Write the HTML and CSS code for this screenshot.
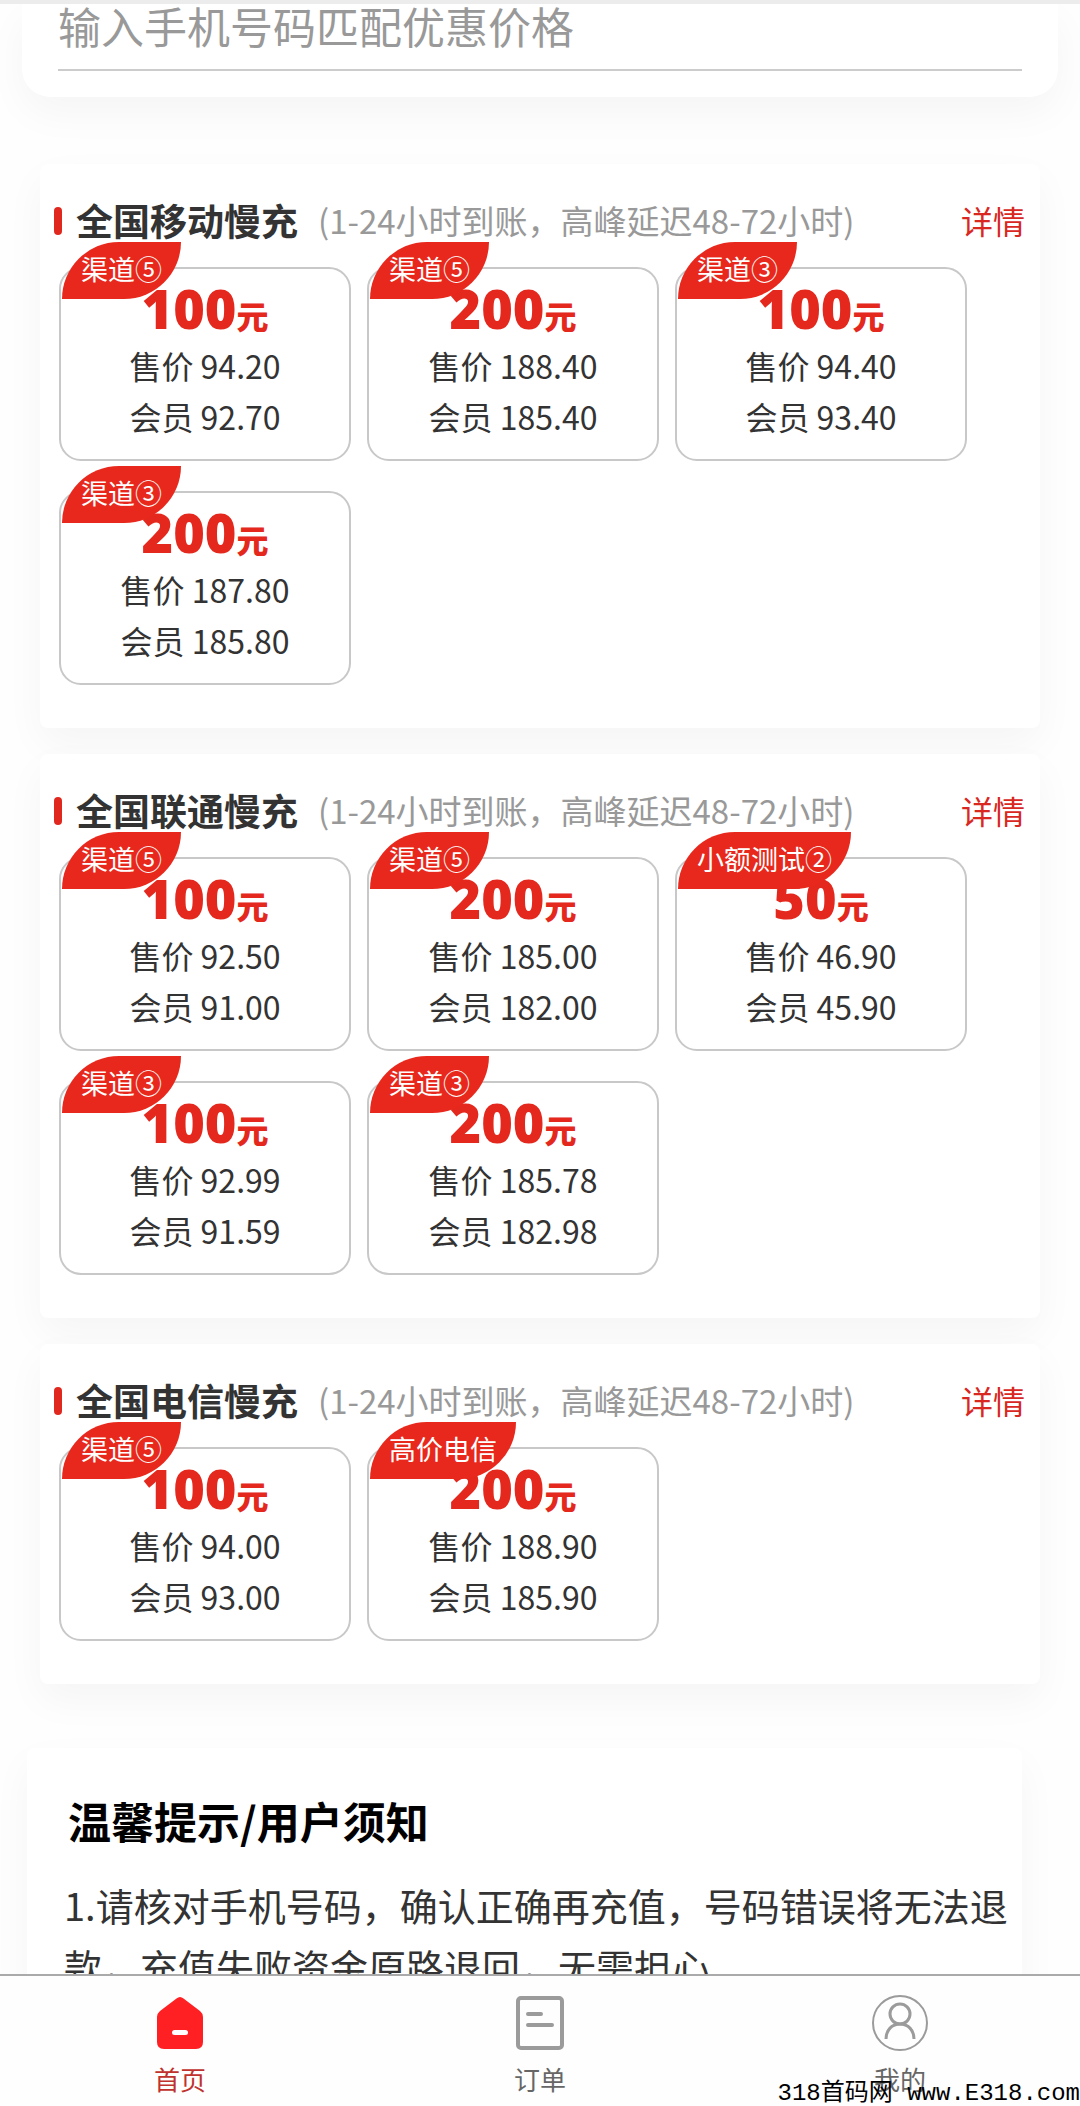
FILE: index.html
```html
<!DOCTYPE html>
<html lang="zh-CN">
<head>
  <meta charset="UTF-8" />
  <meta name="viewport" content="width=device-width, initial-scale=1.0" />
  <title>话费充值</title>
  <link rel="stylesheet" href="styles.css">
</head>
<body>
  <main class="content">
    <form class="search">
      <input class="search-input" type="tel" id="phone" name="phone" aria-label="手机号码" placeholder="输入手机号码匹配优惠价格" />
    </form>

    <section class="panel">
      <div class="panel-head">
        <h2 class="panel-title">全国移动慢充</h2>
        <span class="panel-note">(1-24小时到账，高峰延迟48-72小时)</span>
        <a class="panel-link" href="#">详情</a>
      </div>
      <div class="goods">
        <button type="button" class="item">
          <span class="badge">渠道⑤</span>
          <span class="amount">100<small>元</small></span>
          <span class="price">售价 94.20</span>
          <span class="price">会员 92.70</span>
        </button>
        <button type="button" class="item">
          <span class="badge">渠道⑤</span>
          <span class="amount">200<small>元</small></span>
          <span class="price">售价 188.40</span>
          <span class="price">会员 185.40</span>
        </button>
        <button type="button" class="item">
          <span class="badge">渠道③</span>
          <span class="amount">100<small>元</small></span>
          <span class="price">售价 94.40</span>
          <span class="price">会员 93.40</span>
        </button>
        <button type="button" class="item">
          <span class="badge">渠道③</span>
          <span class="amount">200<small>元</small></span>
          <span class="price">售价 187.80</span>
          <span class="price">会员 185.80</span>
        </button>
      </div>
    </section>

    <section class="panel">
      <div class="panel-head">
        <h2 class="panel-title">全国联通慢充</h2>
        <span class="panel-note">(1-24小时到账，高峰延迟48-72小时)</span>
        <a class="panel-link" href="#">详情</a>
      </div>
      <div class="goods">
        <button type="button" class="item">
          <span class="badge">渠道⑤</span>
          <span class="amount">100<small>元</small></span>
          <span class="price">售价 92.50</span>
          <span class="price">会员 91.00</span>
        </button>
        <button type="button" class="item">
          <span class="badge">渠道⑤</span>
          <span class="amount">200<small>元</small></span>
          <span class="price">售价 185.00</span>
          <span class="price">会员 182.00</span>
        </button>
        <button type="button" class="item">
          <span class="badge">小额测试②</span>
          <span class="amount">50<small>元</small></span>
          <span class="price">售价 46.90</span>
          <span class="price">会员 45.90</span>
        </button>
        <button type="button" class="item">
          <span class="badge">渠道③</span>
          <span class="amount">100<small>元</small></span>
          <span class="price">售价 92.99</span>
          <span class="price">会员 91.59</span>
        </button>
        <button type="button" class="item">
          <span class="badge">渠道③</span>
          <span class="amount">200<small>元</small></span>
          <span class="price">售价 185.78</span>
          <span class="price">会员 182.98</span>
        </button>
      </div>
    </section>

    <section class="panel">
      <div class="panel-head">
        <h2 class="panel-title">全国电信慢充</h2>
        <span class="panel-note">(1-24小时到账，高峰延迟48-72小时)</span>
        <a class="panel-link" href="#">详情</a>
      </div>
      <div class="goods">
        <button type="button" class="item">
          <span class="badge">渠道⑤</span>
          <span class="amount">100<small>元</small></span>
          <span class="price">售价 94.00</span>
          <span class="price">会员 93.00</span>
        </button>
        <button type="button" class="item">
          <span class="badge">高价电信</span>
          <span class="amount">200<small>元</small></span>
          <span class="price">售价 188.90</span>
          <span class="price">会员 185.90</span>
        </button>
      </div>
    </section>

    <section class="notice">
      <h2 class="notice-title">温馨提示/用户须知</h2>
      <p class="notice-text">1.请核对手机号码，确认正确再充值，号码错误将无法退款，充值失败资金原路退回，无需担心</p>
    </section>
  </main>

  <nav class="tabbar">
    <a class="tab active" href="#">
      <svg class="tab-icon" viewBox="0 0 60 60" aria-hidden="true">
        <path d="M26.500 5.500Q30 2.500 33.500 5.500L50 18Q53 20.500 53 24V49Q53 56 46 56H14Q7 56 7 49V24Q7 20.500 10 18Z" fill="#ff2024"/>
        <path d="M24.500 39.500H35.500" stroke="#fff" stroke-width="5" stroke-linecap="round"/>
      </svg>
      <span>首页</span>
    </a>
    <a class="tab" href="#">
      <svg class="tab-icon" viewBox="0 0 60 60" fill="none" stroke="#9b9b9b" stroke-width="4" stroke-linecap="round" aria-hidden="true">
        <rect x="8" y="5" width="44" height="50" rx="3"/>
        <path d="M18 21H31M18 32H42"/>
      </svg>
      <span>订单</span>
    </a>
    <a class="tab" href="#">
      <svg class="tab-icon" viewBox="0 0 60 60" fill="none" stroke="#9b9b9b" stroke-width="2" aria-hidden="true">
        <circle cx="30" cy="30" r="27"/>
        <circle cx="30" cy="21" r="10" stroke-width="3"/>
        <path d="M16 46C16 37 22 31 30 31S44 37 44 46" stroke-width="3"/>
      </svg>
      <span>我的</span>
    </a>
    <span class="site">318首码网 www.E318.com</span>
  </nav>
</body>
</html>
```

FILE: styles.css
```css
* {
  box-sizing: border-box;
}
body {
  margin: 0;
  height: 100vh;
  display: flex;
  flex-direction: column;
  font-family: "Noto Sans CJK SC", sans-serif;
  color: #333;
  background-color: #fefefe;
}
a {
  text-decoration: none;
}
.content {
  flex: 1;
  min-height: 0;
  overflow-y: auto;
  scrollbar-width: none;
  border-top: 4px solid #ececec;
}

/* search */
.search {
  margin: 0 22px 67px;
  padding: 0 36px 26px;
  background-color: #fff;
  border-radius: 0 0 28px 28px;
  box-shadow: 0 16px 40px rgba(0, 0, 0, 0.04);
}
.search-input {
  display: block;
  width: 100%;
  height: 67px;
  padding: 0 0 24px;
  border: none;
  border-bottom: 2px solid #ccc;
  background: none;
  font-family: inherit;
  font-size: 43px;
  line-height: 40px;
  color: #333;
  outline: none;
}
.search-input::placeholder {
  color: #999;
  opacity: 1;
}

/* goods panels */
.panel {
  margin: 0 40px 26px;
  padding: 34px 15px 43px 14px;
  background-color: #fff;
  border-radius: 8px;
  box-shadow: 0 16px 40px rgba(0, 0, 0, 0.04);
}
.panel-head {
  display: flex;
  align-items: center;
  height: 45px;
  margin-bottom: 24px;
  white-space: nowrap;
}
.panel-head::before {
  content: "";
  width: 8px;
  height: 28px;
  margin-right: 14px;
  border-radius: 4px;
  background-color: #e0281f;
}
.panel-title {
  margin: 0 20px 0 0;
  font-size: 37px;
  line-height: 45px;
}
.panel-note {
  font-size: 33px;
  line-height: 45px;
  color: #999;
}
.panel-link {
  margin-left: auto;
  font-size: 32px;
  line-height: 45px;
  color: #d8281f;
}
.goods {
  display: grid;
  grid-template-columns: repeat(3, 1fr);
  gap: 30px 16px;
  padding: 0 58px 0 5px;
}
.item {
  position: relative;
  display: flex;
  flex-direction: column;
  align-items: center;
  padding: 7px 0 17px;
  border: 2px solid #c8c8c8;
  border-radius: 22px;
  background-color: #fff;
  font-family: inherit;
  color: #333;
  cursor: pointer;
}
.badge {
  position: absolute;
  top: -27px;
  left: 1px;
  padding: 0 19px 3px;
  border-radius: 57px 0;
  background-color: #e8281c;
  font-size: 27px;
  line-height: 54px;
  color: #fff;
  white-space: nowrap;
}
.amount {
  font-family: "Open Sans", "Noto Sans CJK SC", sans-serif;
  font-size: 54px;
  font-weight: 800;
  line-height: 64px;
  color: #e4281d;
}
.amount small {
  font-family: "Noto Sans CJK SC", sans-serif;
  font-size: 32px;
  line-height: 32px;
}
.price {
  font-size: 32px;
  line-height: 51px;
}

/* notice */
.notice {
  margin: 64px 58px 0 27px;
  padding: 40px 12px 40px 37px;
  background-color: #fff;
  border-radius: 8px;
  box-shadow: 0 16px 40px rgba(0, 0, 0, 0.04);
}
.notice-title {
  margin: 0 4px 22px;
  font-size: 43px;
  line-height: 64px;
  color: #000;
}
.notice-text {
  margin: 0;
  font-size: 38px;
  line-height: 61px;
}

/* bottom tabs */
.tabbar {
  position: relative;
  display: flex;
  height: 132px;
  border-top: 2px solid #aaa;
  background-color: #fefefe;
}
.tab {
  flex: 1;
  display: flex;
  flex-direction: column;
  align-items: center;
  padding-top: 17px;
  font-size: 26px;
  line-height: 52px;
  color: #666;
}
.tab.active {
  color: #c0322d;
}
.tab-icon {
  width: 60px;
  height: 60px;
}
.site {
  position: absolute;
  right: 0;
  bottom: 0;
  font-family: "Liberation Mono", "Noto Sans CJK SC", monospace;
  font-size: 24px;
  line-height: 24px;
  color: #000;
}
```
